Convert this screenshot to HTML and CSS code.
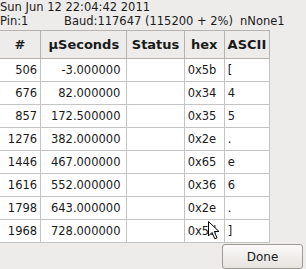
FILE: index.html
```html
<!DOCTYPE html>
<html>
<head>
<meta charset="utf-8">
<link rel="stylesheet" href="styles.css">
</head>
<body>
<div class="win">
  <div class="info">
    <div class="line">Sun Jun 12 22:04:42 2011</div>
    <div class="line line2">
      <span class="pin">Pin:1</span>
      <span class="baud">Baud:117647 (115200 + 2%)</span>
      <span class="mode">nNone1</span>
    </div>
  </div>
  <table class="grid">
    <thead>
      <tr>
        <th class="c1">#</th>
        <th class="c2">µSeconds</th>
        <th class="c3">Status</th>
        <th class="c4">hex</th>
        <th class="c5">ASCII</th>
      </tr>
    </thead>
    <tbody>
      <tr><td class="num">506</td><td class="num us">-3.000000</td><td></td><td class="txt">0x5b</td><td class="txt">[</td></tr>
      <tr><td class="num">676</td><td class="num us">82.000000</td><td></td><td class="txt">0x34</td><td class="txt">4</td></tr>
      <tr><td class="num">857</td><td class="num us">172.500000</td><td></td><td class="txt">0x35</td><td class="txt">5</td></tr>
      <tr><td class="num">1276</td><td class="num us">382.000000</td><td></td><td class="txt">0x2e</td><td class="txt">.</td></tr>
      <tr><td class="num">1446</td><td class="num us">467.000000</td><td></td><td class="txt">0x65</td><td class="txt">e</td></tr>
      <tr><td class="num">1616</td><td class="num us">552.000000</td><td></td><td class="txt">0x36</td><td class="txt">6</td></tr>
      <tr><td class="num">1798</td><td class="num us">643.000000</td><td></td><td class="txt">0x2e</td><td class="txt">.</td></tr>
      <tr><td class="num">1968</td><td class="num us">728.000000</td><td></td><td class="txt">0x5d</td><td class="txt">]</td></tr>
    </tbody>
  </table>
  <div class="actions">
    <button class="btn">Done</button>
  </div>
  <svg class="cursor" width="14" height="21" viewBox="0 0 14 21">
    <path d="M1.5 1.5 L1.5 16 L5 12.5 L7.8 18.8 L10 17.8 L7.3 11.5 L12 11.5 Z" fill="#fff" stroke="#000" stroke-width="1" stroke-linejoin="miter"/>
  </svg>
</div>
</body>
</html>
```
FILE: styles.css
```css
html, body {
  margin: 0;
  padding: 0;
  background: #edeceb;
}
body {
  font-family: "DejaVu Sans", sans-serif;
  font-size: 11.5px;
  color: #1a1a1a;
  width: 306px;
  height: 269px;
  overflow: hidden;
}
.win {
  position: relative;
  width: 306px;
  height: 269px;
}
.info {
  display: flex;
  flex-direction: column;
}
.line {
  height: 14px;
  line-height: 14px;
}
.line2 {
  display: flex;
}
.pin {
  width: 64px;
}
.mode {
  margin-left: 7px;
}
.grid {
  margin-top: 2px;
  border-collapse: collapse;
  table-layout: fixed;
  width: 270px;
  background: #fff;
}
.grid th {
  background: #edeceb;
  font-weight: bold;
  font-size: 13px;
  height: 27px;
  padding: 0;
  border: 1px solid #b5b3b0;
  text-align: center;
}
.grid th.c1 { width: 40px; border-left: none; }
.grid th.c2 { width: 85px; }
.grid th.c3 { width: 56px; }
.grid th.c4 { width: 39px; }
.grid th.c5 { width: 44px; }
.grid td {
  height: 22px;
  padding: 0;
  border: 1px solid #c4c4c4;
  white-space: nowrap;
}
.grid td:first-child { border-left: none; }
.grid .num {
  text-align: right;
  padding-right: 3px;
}
.grid .us {
  padding-right: 6px;
}
.grid .txt {
  padding-left: 3px;
}
.actions {
  display: flex;
  justify-content: flex-end;
  padding: 1px 3px 0 0;
}
.btn {
  width: 81px;
  height: 25px;
  font-family: "DejaVu Sans", sans-serif;
  font-size: 12px;
  color: #1a1a1a;
  border: 1px solid #9e9a94;
  border-radius: 3px;
  background: linear-gradient(#fbfaf9, #e6e3df);
  padding: 0;
}
.cursor {
  position: absolute;
  left: 207px;
  top: 220px;
}
```
